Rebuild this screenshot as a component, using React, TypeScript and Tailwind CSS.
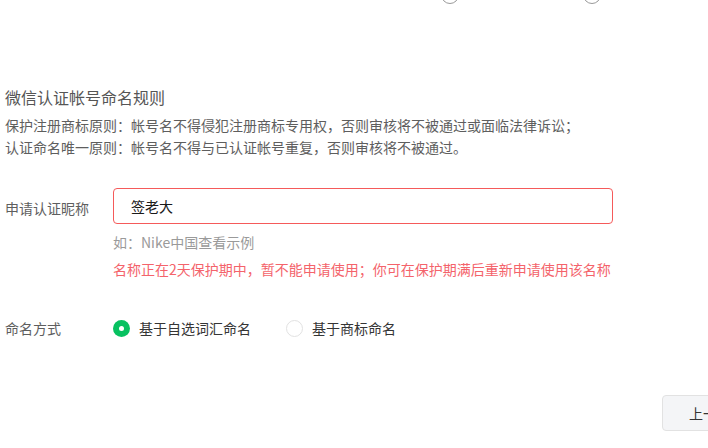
import React from "react";

const Radio = ({ checked, label }: { checked: boolean; label: string }) => (
  <label className="flex items-center gap-[9px] text-[14px] text-[#353535]">
    {checked ? (
      <span className="flex h-[17px] w-[17px] items-center justify-center rounded-full bg-[#07c160]">
        <span className="h-[5px] w-[5px] rounded-full bg-white" />
      </span>
    ) : (
      <span className="h-[17px] w-[17px] rounded-full border border-[#e2e2e2] bg-white" />
    )}
    {label}
  </label>
);

export default function App() {
  return (
    <div
      className="relative h-[448px] w-[708px] overflow-hidden bg-white"
      style={{ fontFamily: '"Noto Sans CJK SC", "Noto Sans", sans-serif' }}
    >
      {/* tail of the previous row's radios */}
      <div className="flex h-[4px] overflow-visible">
        <div className="-mt-[14px] ml-[441px] flex gap-[124px]">
          <span className="h-[18px] w-[18px] rounded-full border border-[#9a9a9a]" />
          <span className="h-[18px] w-[18px] rounded-full border border-[#9a9a9a]" />
        </div>
      </div>

      <div className="pl-[5px] pt-[81px]">
        <h3 className="text-[16px] leading-[24px] text-[#555]">微信认证帐号命名规则</h3>
        <div className="mt-[5px] text-[14px] leading-[22px] text-[#5e5e5e]">
          <p>保护注册商标原则：帐号名不得侵犯注册商标专用权，否则审核将不被通过或面临法律诉讼；</p>
          <p>认证命名唯一原则：帐号名不得与已认证帐号重复，否则审核将不被通过。</p>
        </div>

        {/* nickname */}
        <div className="mt-[30px] flex">
          <div className="w-[108px] pt-[9px] text-[14px] leading-[22px] text-[#5e5e5e]">申请认证昵称</div>
          <div className="flex flex-col">
            <div className="flex h-[36px] w-[500px] items-center rounded-[4px] border border-[#f55a5a] pl-[17px] text-[14px] text-[#1a1a1a]">
              签老大
            </div>
            <div className="mt-[8px] text-[14px] leading-[20px] text-[#9a9a9a]">如：Nike中国查看示例</div>
            <div className="mt-[7px] text-[14px] leading-[20px] text-[#f4636b]">
              名称正在2天保护期中，暂不能申请使用；你可在保护期满后重新申请使用该名称
            </div>
          </div>
        </div>

        {/* naming type */}
        <div className="mt-[38px] flex items-center">
          <div className="w-[108px] text-[14px] leading-[22px] text-[#5e5e5e]">命名方式</div>
          <div className="flex items-center gap-[35px]">
            <Radio checked label="基于自选词汇命名" />
            <Radio checked={false} label="基于商标命名" />
          </div>
        </div>

        <div className="mt-[56px] flex justify-end">
          <button className="-mr-[40px] h-[36px] w-[86px] rounded-[4px] border border-[#e2e2e2] bg-[#f4f5f7] pl-[26px] text-left text-[14px] text-[#353535]">
            上一步
          </button>
        </div>
      </div>
    </div>
  );
}
